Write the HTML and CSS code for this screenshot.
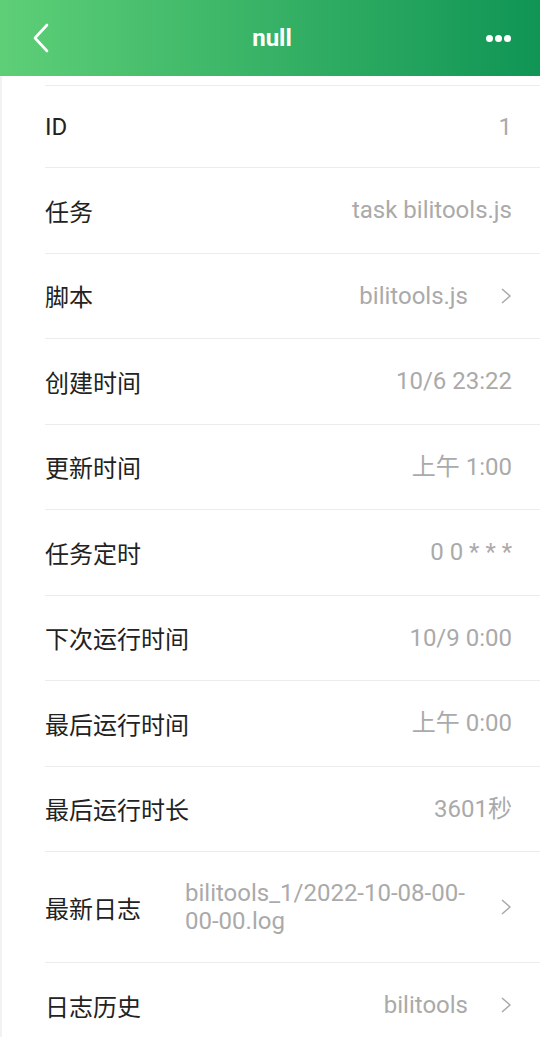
FILE: index.html
```html
<!DOCTYPE HTML>
<html>
<head>
  <meta http-equiv="Content-Type" content="text/html; charset=UTF-8">
  <title>null</title>
  <link rel="stylesheet" href="styles.css">
</head>
<body>
  <div class="header">
    <div class="back">
      <svg width="20" height="30" viewBox="0 0 20 30"><path d="M15 2 L3 15 L15 28" fill="none" stroke="#fff" stroke-width="2.6" stroke-linecap="round" stroke-linejoin="round"/></svg>
    </div>
    <div class="title">null</div>
    <div class="more">
      <span class="dot"></span><span class="dot"></span><span class="dot"></span>
    </div>
  </div>

  <div class="list">
    <div class="row first">
      <div class="label">ID</div>
      <div class="value">1</div>
    </div>
    <div class="row">
      <div class="label">任务</div>
      <div class="value">task bilitools.js</div>
    </div>
    <div class="row">
      <div class="label">脚本</div>
      <div class="value">bilitools.js</div>
      <div class="arrow"><svg width="12" height="18" viewBox="0 0 12 18"><path d="M2 2 L10 9 L2 16" fill="none" stroke="#aaa" stroke-width="1.6" stroke-linejoin="round"/></svg></div>
    </div>
    <div class="row">
      <div class="label">创建时间</div>
      <div class="value">10/6 23:22</div>
    </div>
    <div class="row">
      <div class="label">更新时间</div>
      <div class="value">上午 1:00</div>
    </div>
    <div class="row">
      <div class="label">任务定时</div>
      <div class="value">0 0 * * *</div>
    </div>
    <div class="row">
      <div class="label">下次运行时间</div>
      <div class="value">10/9 0:00</div>
    </div>
    <div class="row">
      <div class="label">最后运行时间</div>
      <div class="value">上午 0:00</div>
    </div>
    <div class="row">
      <div class="label">最后运行时长</div>
      <div class="value">3601秒</div>
    </div>
    <div class="row tall">
      <div class="label">最新日志</div>
      <div class="value">bilitools_1/2022-10-08-00-00-00.log</div>
      <div class="arrow"><svg width="12" height="18" viewBox="0 0 12 18"><path d="M2 2 L10 9 L2 16" fill="none" stroke="#aaa" stroke-width="1.6" stroke-linejoin="round"/></svg></div>
    </div>
    <div class="row">
      <div class="label">日志历史</div>
      <div class="value">bilitools</div>
      <div class="arrow"><svg width="12" height="18" viewBox="0 0 12 18"><path d="M2 2 L10 9 L2 16" fill="none" stroke="#aaa" stroke-width="1.6" stroke-linejoin="round"/></svg></div>
    </div>
  </div>
</body>
</html>
```

FILE: styles.css
```css
body, html {
    margin: 0;
    padding: 0;
    background-color: #fff;
    font-family: Roboto, "Noto Sans CJK SC", sans-serif;
}

.header {
    height: 76px;
    display: flex;
    align-items: center;
    justify-content: space-between;
    padding: 0 29px 0 32px;
    background: linear-gradient(to right, #5ecf77, #109555);
    color: #fff;
}

.back {
    width: 20px;
    height: 30px;
}

.back svg {
    display: block;
}

.title {
    font-size: 24px;
    font-weight: bold;
    padding-left: 6px;
}

.more {
    display: flex;
    gap: 2px;
}

.dot {
    width: 7px;
    height: 7px;
    border-radius: 50%;
    background-color: #fff;
}

.list {
    padding-top: 9px;
    border-left: 2px solid #f2f2f2;
}

.row {
    display: flex;
    align-items: center;
    min-height: 84.5px;
    margin-left: 43px;
    padding-right: 28px;
    border-top: 1px solid #ececec;
    font-size: 24px;
}

.row.first {
    min-height: 81px;
}

.row.tall {
    min-height: 110px;
}

.label {
    color: #222;
    flex-shrink: 0;
    margin-right: 44px;
}

.value {
    margin-left: auto;
    color: #aaa;
    line-height: 28px;
}

.arrow {
    flex-shrink: 0;
    width: 12px;
    margin-left: 32px;
    height: 18px;
}

.arrow svg {
    display: block;
}
```
